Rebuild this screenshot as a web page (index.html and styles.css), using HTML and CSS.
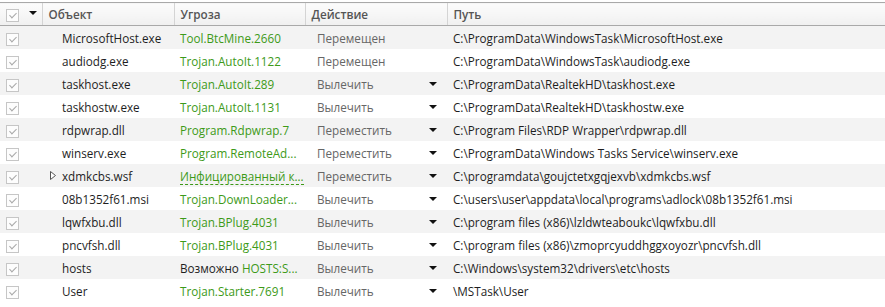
FILE: index.html
```html
<!doctype html>
<html>
<head>
<meta charset="UTF-8" />
<title>Угрозы</title>
<link rel="stylesheet" href="styles.css">
</head>
<body>
	<table id="threats">
		<colgroup>
			<col class="c-check" />
			<col class="c-obj" />
			<col class="c-threat" />
			<col class="c-action" />
			<col class="c-path" />
		</colgroup>
		<thead>
		<tr>
			<th class="check"><span class="box"></span><span class="sort"></span></th>
			<th>Объект</th>
			<th>Угроза</th>
			<th>Действие</th>
			<th>Путь</th>
		</tr>
		</thead>
		<tbody>
		<tr>
			<td class="check"><span class="box"></span></td>
			<td class="obj">MicrosoftHost.exe</td>
			<td class="threat">Tool.BtcMine.2660</td>
			<td class="action">Перемещен</td>
			<td>C:\ProgramData\WindowsTask\MicrosoftHost.exe</td>
		</tr>
		<tr>
			<td class="check"><span class="box"></span></td>
			<td class="obj">audiodg.exe</td>
			<td class="threat">Trojan.AutoIt.1122</td>
			<td class="action">Перемещен</td>
			<td>C:\ProgramData\WindowsTask\audiodg.exe</td>
		</tr>
		<tr>
			<td class="check"><span class="box"></span></td>
			<td class="obj">taskhost.exe</td>
			<td class="threat">Trojan.AutoIt.289</td>
			<td class="action drop">Вылечить</td>
			<td>C:\ProgramData\RealtekHD\taskhost.exe</td>
		</tr>
		<tr>
			<td class="check"><span class="box"></span></td>
			<td class="obj">taskhostw.exe</td>
			<td class="threat">Trojan.AutoIt.1131</td>
			<td class="action drop">Вылечить</td>
			<td>C:\ProgramData\RealtekHD\taskhostw.exe</td>
		</tr>
		<tr>
			<td class="check"><span class="box"></span></td>
			<td class="obj">rdpwrap.dll</td>
			<td class="threat">Program.Rdpwrap.7</td>
			<td class="action drop">Переместить</td>
			<td>C:\Program Files\RDP Wrapper\rdpwrap.dll</td>
		</tr>
		<tr>
			<td class="check"><span class="box"></span></td>
			<td class="obj">winserv.exe</td>
			<td class="threat">Program.RemoteAd...</td>
			<td class="action drop">Переместить</td>
			<td>C:\ProgramData\Windows Tasks Service\winserv.exe</td>
		</tr>
		<tr>
			<td class="check"><span class="box"></span></td>
			<td class="obj"><svg class="expand" width="6" height="9" viewBox="0 0 6 9"><path d="M0.5 0.5 L5.5 4.5 L0.5 8.5 Z" fill="#fff" stroke="#555"/></svg>xdmkcbs.wsf</td>
			<td class="threat"><span class="dashed">Инфицированный к...</span></td>
			<td class="action drop">Переместить</td>
			<td>C:\programdata\goujctetxgqjexvb\xdmkcbs.wsf</td>
		</tr>
		<tr>
			<td class="check"><span class="box"></span></td>
			<td class="obj">08b1352f61.msi</td>
			<td class="threat">Trojan.DownLoader...</td>
			<td class="action drop">Вылечить</td>
			<td>C:\users\user\appdata\local\programs\adlock\08b1352f61.msi</td>
		</tr>
		<tr>
			<td class="check"><span class="box"></span></td>
			<td class="obj">lqwfxbu.dll</td>
			<td class="threat">Trojan.BPlug.4031</td>
			<td class="action drop">Вылечить</td>
			<td>C:\program files (x86)\lzldwteaboukc\lqwfxbu.dll</td>
		</tr>
		<tr>
			<td class="check"><span class="box"></span></td>
			<td class="obj">pncvfsh.dll</td>
			<td class="threat">Trojan.BPlug.4031</td>
			<td class="action drop">Вылечить</td>
			<td>C:\program files (x86)\zmoprcyuddhggxoyozr\pncvfsh.dll</td>
		</tr>
		<tr>
			<td class="check"><span class="box"></span></td>
			<td class="obj">hosts</td>
			<td class="threat"><span class="plain">Возможно</span> HOSTS:S...</td>
			<td class="action drop">Вылечить</td>
			<td>C:\Windows\system32\drivers\etc\hosts</td>
		</tr>
		<tr>
			<td class="check"><span class="box"></span></td>
			<td class="obj">User</td>
			<td class="threat">Trojan.Starter.7691</td>
			<td class="action drop">Вылечить</td>
			<td>\MSTask\User</td>
		</tr>
		</tbody>
	</table>
</body>
</html>
```

FILE: styles.css
```css
html, body, table, tr, td, th{
	margin:0;
	padding:0;
}
body{
	background:#fff;
	font-family:"Open Sans", "Noto Sans", sans-serif;
	font-size:11.7px;
	color:#1e1e1e;
	padding-top:2px;
}
#threats{
	width:100%;
	border-collapse:collapse;
	table-layout:fixed;
}
.c-check{ width:42px; }
.c-obj{ width:132px; }
.c-threat{ width:131px; }
.c-action{ width:142px; }
#threats thead th{
	height:22px;
	padding:0 6px;
	text-align:left;
	font-weight:600;
	color:#555;
	background:linear-gradient(#fcfcfc, #f0f0f0);
	border-top:1px solid #a9a9a9;
	border-bottom:1px solid #a9a9a9;
	border-left:1px solid #d4d4d4;
}
#threats thead th.check{
	border-left:0;
	padding:0 0 0 6px;
}
#threats tbody td{
	height:23px;
	padding:0 6px;
	white-space:nowrap;
}
#threats tbody tr:nth-child(2n-1){
	background:#f3f3f3;
}
#threats tbody td.check{
	padding:0 0 0 6px;
}
.box{
	display:inline-block;
	vertical-align:middle;
	box-sizing:border-box;
	width:13px;
	height:13px;
	border:1px solid #c6c6c6;
	background:#fdfdfd;
	position:relative;
}
.box:after{
	content:"";
	position:absolute;
	left:4px;
	top:1px;
	width:3px;
	height:6px;
	border-right:1px solid #a8a8a8;
	border-bottom:1px solid #a8a8a8;
	transform:rotate(45deg);
}
.sort{
	display:inline-block;
	vertical-align:middle;
	margin-left:10px;
	margin-top:-5px;
	border-left:4px solid transparent;
	border-right:4px solid transparent;
	border-top:4px solid #111;
}
#threats td.obj{
	padding-left:20px;
	position:relative;
}
.expand{
	position:absolute;
	left:8px;
	top:7px;
}
.threat{
	color:#3d9a18;
}
.plain{
	color:#1e1e1e;
}
.dashed{
	border-bottom:1px dashed #3d9a18;
}
#threats td.action{
	color:#666;
	padding-left:12px;
	position:relative;
}
.drop:after{
	content:"";
	position:absolute;
	right:10px;
	top:10px;
	border-left:4px solid transparent;
	border-right:4px solid transparent;
	border-top:4px solid #111;
}
```
